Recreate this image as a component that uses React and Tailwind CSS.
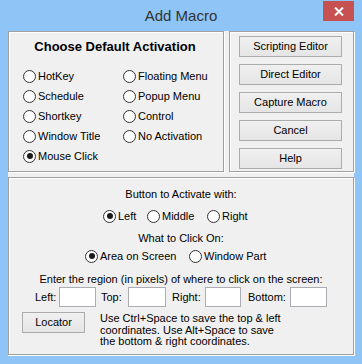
import React from 'react';

const Radio = ({ checked = false, label, className = '' }) => (
  <label className={`flex items-center h-[18px] ${className}`}>
    <span className="w-[13px] h-[13px] shrink-0 rounded-full border border-[#333] bg-white flex items-center justify-center">
      {checked && <span className="w-[6px] h-[6px] rounded-full bg-[#1a1a1a]" />}
    </span>
    <span className="ml-[2px] whitespace-nowrap">{label}</span>
  </label>
);

const WinButton = ({ children, className = '' }) => (
  <button className={`h-[21px] border border-[#acacac] bg-gradient-to-b from-[#f0f0f0] to-[#e5e5e5] text-black text-[11px] leading-none ${className}`}>
    {children}
  </button>
);

const TextBox = ({ width }) => (
  <input
    type="text"
    className={`h-[20px] bg-white border border-[#abadb3] focus:outline-none ${width}`}
  />
);

const App = () => {
  const groupBox = 'border border-[#a0a0a0] shadow-[inset_1px_1px_0_#fff,1px_1px_0_#fff]';

  return (
    <div className="w-[362px] h-[364px] bg-[#8ec5f6] flex flex-col font-['Liberation_Sans',Arial,sans-serif] text-[11px] text-black">
      {/* Title bar */}
      <div className="h-[31px] grid grid-cols-[1fr_auto_1fr] items-start shrink-0">
        <div />
        <div className="text-[15px] text-[#333] leading-none pt-[8px]">Add Macro</div>
        <div className="flex justify-end pr-[8px] pt-[1px]">
          <button className="w-[31px] h-[20px] bg-[#c75050] flex items-center justify-center">
            <svg width="10" height="9" viewBox="0 0 10 9">
              <path d="M1 0.5 L9 8.5 M9 0.5 L1 8.5" stroke="#fff" strokeWidth="2" />
            </svg>
          </button>
        </div>
      </div>

      {/* Client area */}
      <div className="mx-[8px] h-[325px] bg-[#f0f0f0] flex flex-col">
        <div className="flex gap-[5px] h-[141px]">
          {/* Default activation */}
          <div className={`w-[216px] ${groupBox} flex flex-col`}>
            <div className="text-[13px] font-bold text-center leading-[16px] mt-[7px] pr-[2px]">
              Choose Default Activation
            </div>
            <div className="grid grid-cols-[100px_1fr] gap-y-[2px] mt-[12px] pl-[14px]">
              <Radio label="HotKey" />
              <Radio label="Floating Menu" />
              <Radio label="Schedule" />
              <Radio label="Popup Menu" />
              <Radio label="Shortkey" />
              <Radio label="Control" />
              <Radio label="Window Title" />
              <Radio label="No Activation" />
              <Radio label="Mouse Click" checked />
            </div>
          </div>

          {/* Editor buttons */}
          <div className={`flex-1 ${groupBox} flex flex-col gap-[7px] pt-[4px] pl-[9px]`}>
            <WinButton className="w-[103px]">Scripting Editor</WinButton>
            <WinButton className="w-[103px]">Direct Editor</WinButton>
            <WinButton className="w-[103px]">Capture Macro</WinButton>
            <WinButton className="w-[103px]">Cancel</WinButton>
            <WinButton className="w-[103px]">Help</WinButton>
          </div>
        </div>

        {/* Mouse click options */}
        <div className={`mt-[5px] h-[178px] ${groupBox} flex flex-col`}>
          <div className="text-center leading-[16px] mt-[8px]">Button to Activate with:</div>
          <div className="flex mt-[5px] pl-[94px]">
            <Radio label="Left" checked className="w-[44px]" />
            <Radio label="Middle" className="w-[60px]" />
            <Radio label="Right" />
          </div>
          <div className="text-center leading-[16px] mt-[5px]">What to Click On:</div>
          <div className="flex mt-[1px] pl-[76px]">
            <Radio label="Area on Screen" checked className="w-[104px]" />
            <Radio label="Window Part" />
          </div>
          <div className="text-center leading-[16px] mt-[6px]">
            Enter the region (in pixels) of where to click on the screen:
          </div>
          <div className="flex items-center mt-0 pl-[26px] h-[20px]">
            <span className="w-[24px]">Left:</span>
            <TextBox width="w-[37px]" />
            <span className="w-[27px] ml-[5px]">Top:</span>
            <TextBox width="w-[38px]" />
            <span className="w-[33px] ml-[6px]">Right:</span>
            <TextBox width="w-[36px]" />
            <span className="w-[42px] ml-[7px]">Bottom:</span>
            <TextBox width="w-[37px]" />
          </div>
          <div className="flex items-start mt-[5px] pl-[13px]">
            <WinButton className="w-[63px]">Locator</WinButton>
            <p className="ml-[15px] leading-[11.5px] mt-[1px]">
              Use Ctrl+Space to save the top &amp; left
              <br />
              coordinates. Use Alt+Space to save
              <br />
              the bottom &amp; right coordinates.
            </p>
          </div>
        </div>
      </div>
    </div>
  );
};

export default App;
